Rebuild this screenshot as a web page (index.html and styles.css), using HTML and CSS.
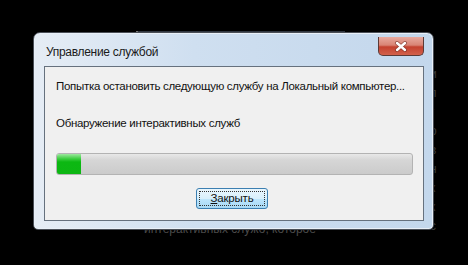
FILE: index.html
```html
<!DOCTYPE html>
<html>
	<head>
		<meta charset="utf-8">
		<title>Управление службой</title>
		<link rel="stylesheet" href="styles.css">
	</head>
	<body>
		<!-- окно на заднем плане -->
		<div class="backWin">
			<div class="backTop"></div>
			<ul class="backLetters">
				<li>и</li>
				<li>п</li>
				<li>г</li>
				<li>о</li>
				<li>в</li>
				<li>н</li>
				<li>к</li>
				<li>к</li>
				<li>с</li>
			</ul>
			<div class="backText">интерактивных служб, которое</div>
		</div>

		<div class="win">
			<div class="titleBar">
				<span class="title">Управление службой</span>
				<div class="closeBtn">
					<svg width="14" height="11" viewBox="0 0 14 11">
						<path d="M3 2 L11 9 M11 2 L3 9" stroke="#6a2a22" stroke-width="4" stroke-linecap="round" opacity="0.6"/>
						<path d="M3 2 L11 9 M11 2 L3 9" stroke="#fff" stroke-width="2.4" stroke-linecap="round"/>
					</svg>
				</div>
			</div>
			<div class="client">
				<p class="msg">Попытка остановить следующую службу на Локальный компьютер...</p>
				<p class="msg status">Обнаружение интерактивных служб</p>
				<div class="progress">
					<div class="fill" style="width: 24px;"></div>
				</div>
				<div class="btnRow">
					<button class="btn"><span class="inner"><u>З</u>акрыть</span></button>
				</div>
			</div>
		</div>
	</body>
</html>
```

FILE: styles.css
```css
*{
	margin: 0;
	padding: 0;
}
body{
	position: relative;
	width: 468px;
	height: 265px;
	overflow: hidden;
	background-color: #000;
	font-family: "Liberation Sans", Arial, sans-serif;
	font-size: 12px;
}
.backWin{
	position: absolute;
	left: 136px;
	top: 31px;
	width: 310px;
	height: 210px;
}
.backTop{
	height: 4px;
	width: 207px;
	background: linear-gradient(#2b3038, #56657a);
	border-left: 2px solid #777;
}
.backLetters{
	position: absolute;
	left: 294px;
	top: 34px;
	list-style: none;
	color: #3a3a3a;
	line-height: 19px;
	font-size: 12px;
}
.backText{
	position: absolute;
	left: 8px;
	top: 191px;
	color: #4a4a4a;
	font-size: 12px;
}
.win{
	position: relative;
	margin: 32px 0 0 33px;
	width: 401px;
	height: 198px;
	box-sizing: border-box;
	border: 1px solid #4a4f57;
	border-radius: 7px 7px 5px 5px;
	background: linear-gradient(90deg, #e6edf5 0%, #cfdff0 40%, #c3d7ec 100%);
	box-shadow: inset 0 0 0 1px #e9f0f8;
	padding: 0 9px 8px 10px;
	display: flex;
	flex-direction: column;
}
.titleBar{
	height: 33px;
	display: flex;
	justify-content: space-between;
	align-items: flex-start;
}
.title{
	margin-top: 12px;
	margin-left: 2px;
	font-size: 12px;
	letter-spacing: -0.3px;
	color: #1a1a1a;
	white-space: nowrap;
}
.closeBtn{
	margin-top: 4px;
	width: 46px;
	height: 19px;
	box-sizing: border-box;
	border: 1px solid #5b3a36;
	border-top: none;
	border-radius: 0 0 5px 5px;
	background: linear-gradient(#e8aa9f 0%, #d98475 45%, #c4412f 55%, #d2614b 100%);
	display: flex;
	justify-content: center;
	align-items: center;
}
.client{
	flex: 1;
	border: 1px solid #66717e;
	background-color: #f0f0f0;
	padding: 11px 11px 0;
}
.msg{
	line-height: 16px;
	color: #111;
	font-size: 11.5px;
	letter-spacing: -0.3px;
	white-space: nowrap;
}
.status{
	margin-top: 21px;
}
.progress{
	margin-top: 22px;
	width: 357px;
	height: 22px;
	box-sizing: border-box;
	border: 1px solid #b3b3b3;
	border-radius: 3px;
	background: linear-gradient(#e8e8e8 0%, #d6d6d6 30%, #cbcbcb 100%);
	overflow: hidden;
}
.fill{
	height: 100%;
	background: linear-gradient(#9de89f 0%, #38cc3c 25%, #0cb812 40%, #0db613 100%);
}
.btnRow{
	margin-top: 13px;
	display: flex;
	justify-content: center;
	padding-right: 4px;
}
.btn{
	width: 72px;
	height: 21px;
	box-sizing: border-box;
	border: 1px solid #3c7fb1;
	border-radius: 3px;
	background: linear-gradient(#eaf6fd 0%, #d9f0fc 50%, #bee6fd 51%, #a7d9f5 100%);
	padding: 2px;
	font-family: "Liberation Sans", Arial, sans-serif;
	font-size: 11.5px;
	letter-spacing: -0.2px;
	color: #111;
}
.btn .inner{
	display: block;
	height: 100%;
	box-sizing: border-box;
	border: 1px dotted #333;
	line-height: 13px;
}
```
